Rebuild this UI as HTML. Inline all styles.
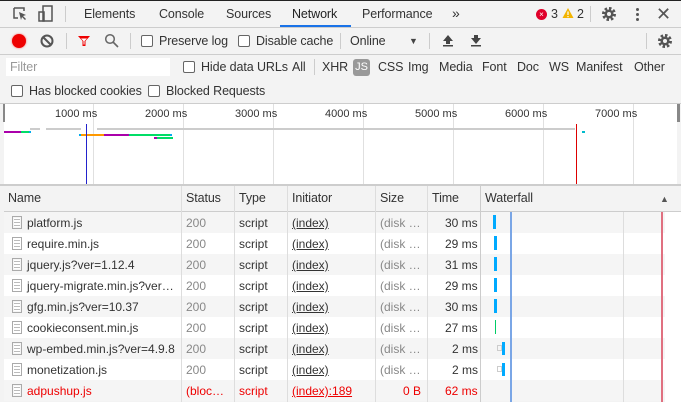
<!DOCTYPE html><html><head><meta charset="utf-8"><style>
*{margin:0;padding:0;box-sizing:border-box}
body{width:681px;height:402px;overflow:hidden;background:#f3f3f3;font-family:"Liberation Sans",sans-serif;font-size:12px;color:#333;position:relative}
.a{position:absolute;white-space:nowrap}
.t{font-size:12.5px;letter-spacing:-0.1px}
.cb{position:absolute;width:12px;height:12px;border:1px solid #666;border-radius:2px;background:#fff}
.hl{position:absolute;height:1px;background:#cdcdcd}
.vl{position:absolute;width:1px;background:#ccc}
.row{position:absolute;left:4px;width:677px;height:21px}
.c{position:absolute;top:4px;white-space:nowrap}
.g{color:#888}
.u{text-decoration:underline}
.doc{position:absolute;left:8px;top:4px;width:10px;height:13px;border:1px solid #aaa;background:repeating-linear-gradient(#fff 0 2px,#bbb 2px 3px);background-clip:content-box;padding:1px}
</style></head><body>
<div class="a" style="left:0;top:0;width:681px;height:1px;background:#222"></div>
<svg class="a" style="left:12px;top:6px" width="16" height="16" viewBox="0 0 16 16"><path d="M2 2h10v3M2 2v10h4" fill="none" stroke="#555" stroke-width="1.5"/><path d="M7 6l7 3-3 1 3 3-1 1-3-3-1 3z" fill="#555"/></svg>
<svg class="a" style="left:38px;top:5px" width="16" height="18" viewBox="0 0 16 18"><rect x="5" y="1" width="9" height="15" fill="none" stroke="#555" stroke-width="1.5"/><rect x="1" y="7" width="5" height="9" fill="none" stroke="#555" stroke-width="1.5"/></svg>
<div class="vl" style="left:65px;top:6px;height:16px"></div>
<div class="a t" style="left:84px;top:7px">Elements</div>
<div class="a t" style="left:159px;top:7px">Console</div>
<div class="a t" style="left:226px;top:7px">Sources</div>
<div class="a t" style="left:292px;top:7px;color:#222">Network</div>
<div class="a" style="left:280px;top:25px;width:71px;height:2px;background:#1a73e8"></div>
<div class="a t" style="left:362px;top:7px">Performance</div>
<div class="a" style="left:452px;top:5px;font-size:14px">»</div>
<div class="a" style="left:536px;top:9px;width:11px;height:11px;border-radius:50%;background:#e0002a;color:#fff;font-size:8px;line-height:11px;text-align:center">×</div>
<div class="a t" style="left:551px;top:7px">3</div>
<svg class="a" style="left:562px;top:7px" width="12" height="12"><path d="M6 1L11.5 11H.5z" fill="#f2b400"/><rect x="5.4" y="4.5" width="1.2" height="3.5" fill="#fff"/><rect x="5.4" y="9" width="1.2" height="1.2" fill="#fff"/></svg>
<div class="a t" style="left:577px;top:7px">2</div>
<div class="vl" style="left:590px;top:6px;height:16px"></div>
<svg class="a" style="left:601px;top:6px" width="16" height="16" viewBox="0 0 16 16"><circle cx="8" cy="8" r="5" fill="none" stroke="#555" stroke-width="4" stroke-dasharray="2.2 1.7"/><circle cx="8" cy="8" r="4.5" fill="#555"/><circle cx="8" cy="8" r="2" fill="#f3f3f3"/></svg>
<div class="a" style="left:636px;top:8px;width:3px;height:3px;background:#555;border-radius:50%;box-shadow:0 5px #555,0 10px #555"></div>
<div class="a" style="left:656px;top:4px;font-size:18px;color:#555">✕</div>
<div class="hl" style="left:0;top:27px;width:681px"></div>
<div class="a" style="left:12px;top:34px;width:14px;height:14px;border-radius:50%;background:#e00;box-shadow:0 0 2px #f66"></div>
<svg class="a" style="left:40px;top:34px" width="14" height="14"><circle cx="7" cy="7" r="5.5" fill="none" stroke="#555" stroke-width="2"/><path d="M3 3l8 8" stroke="#555" stroke-width="2"/></svg>
<div class="vl" style="left:66px;top:33px;height:16px"></div>
<svg class="a" style="left:77px;top:34px" width="14" height="14"><path d="M1 2h12L8.5 7v5h-3V7z" fill="#e00"/><path d="M4 4.5h6L7.5 7v3.5h-1V7z" fill="#fff"/></svg>
<svg class="a" style="left:104px;top:33px" width="15" height="15"><circle cx="6" cy="6" r="4.3" fill="none" stroke="#666" stroke-width="1.5"/><path d="M9 9l5 5" stroke="#666" stroke-width="1.6"/></svg>
<div class="vl" style="left:130px;top:33px;height:16px"></div>
<div class="cb" style="left:141px;top:35px"></div><div class="a t" style="left:159px;top:34px">Preserve log</div>
<div class="cb" style="left:238px;top:35px"></div><div class="a t" style="left:256px;top:34px">Disable cache</div>
<div class="vl" style="left:340px;top:33px;height:16px"></div>
<div class="a t" style="left:350px;top:34px">Online</div>
<div class="a" style="left:409px;top:36px;font-size:9px;color:#444">▼</div>
<div class="vl" style="left:429px;top:33px;height:16px"></div>
<svg class="a" style="left:442px;top:34px" width="12" height="13"><path d="M6 1L1 7h3v3h4V7h3z" fill="#444"/><rect x="1" y="11" width="10" height="1.5" fill="#444"/></svg>
<svg class="a" style="left:470px;top:34px" width="12" height="13"><path d="M6 10L1 4h3V1h4v3h3z" fill="#444"/><rect x="1" y="11" width="10" height="1.5" fill="#444"/></svg>
<div class="vl" style="left:646px;top:33px;height:16px"></div>
<svg class="a" style="left:657px;top:33px" width="16" height="16" viewBox="0 0 16 16"><circle cx="8" cy="8" r="5" fill="none" stroke="#555" stroke-width="4" stroke-dasharray="2.2 1.7"/><circle cx="8" cy="8" r="4.5" fill="#555"/><circle cx="8" cy="8" r="2" fill="#f3f3f3"/></svg>
<div class="hl" style="left:0;top:54px;width:681px"></div>
<div class="a" style="left:6px;top:58px;width:164px;height:18px;background:#fff"></div>
<div class="a t" style="left:10px;top:60px;color:#999">Filter</div>
<div class="cb" style="left:183px;top:61px"></div><div class="a t" style="left:201px;top:60px">Hide data URLs</div>
<div class="a t" style="left:292px;top:60px">All</div>
<div class="vl" style="left:314px;top:59px;height:16px"></div>
<div class="a t" style="left:322px;top:60px">XHR</div>
<div class="a" style="left:353px;top:59px;width:17px;height:17px;background:#999;border-radius:3px;color:#fff;font-size:11px;text-align:center;line-height:17px">JS</div>
<div class="a t" style="left:378px;top:60px">CSS</div>
<div class="a t" style="left:408px;top:60px">Img</div>
<div class="a t" style="left:439px;top:60px">Media</div>
<div class="a t" style="left:482px;top:60px">Font</div>
<div class="a t" style="left:517px;top:60px">Doc</div>
<div class="a t" style="left:549px;top:60px">WS</div>
<div class="a t" style="left:576px;top:60px">Manifest</div>
<div class="a t" style="left:634px;top:60px">Other</div>
<div class="cb" style="left:11px;top:85px"></div><div class="a t" style="left:29px;top:84px">Has blocked cookies</div>
<div class="cb" style="left:148px;top:85px"></div><div class="a t" style="left:166px;top:84px">Blocked Requests</div>
<div class="hl" style="left:0;top:103px;width:681px"></div>
<div class="a" style="left:4px;top:104px;width:673px;height:80px;background:#fff"></div>
<div class="a" style="left:3px;top:104px;width:2px;height:18px;background:#888"></div>
<div class="a" style="left:677px;top:104px;width:3px;height:18px;background:#888"></div>
<div class="vl" style="left:93px;top:104px;height:80px;background:#e0e0e0"></div>
<div class="vl" style="left:183px;top:104px;height:80px;background:#e0e0e0"></div>
<div class="vl" style="left:273px;top:104px;height:80px;background:#e0e0e0"></div>
<div class="vl" style="left:363px;top:104px;height:80px;background:#e0e0e0"></div>
<div class="vl" style="left:453px;top:104px;height:80px;background:#e0e0e0"></div>
<div class="vl" style="left:543px;top:104px;height:80px;background:#e0e0e0"></div>
<div class="vl" style="left:633px;top:104px;height:80px;background:#e0e0e0"></div>
<div class="a" style="left:55px;top:108px;font-size:11px">1000 ms</div>
<div class="a" style="left:145px;top:108px;font-size:11px">2000 ms</div>
<div class="a" style="left:235px;top:108px;font-size:11px">3000 ms</div>
<div class="a" style="left:325px;top:108px;font-size:11px">4000 ms</div>
<div class="a" style="left:415px;top:108px;font-size:11px">5000 ms</div>
<div class="a" style="left:505px;top:108px;font-size:11px">6000 ms</div>
<div class="a" style="left:595px;top:108px;font-size:11px">7000 ms</div>
<div class="a" style="left:30px;top:128px;width:10px;height:2px;background:#ccc"></div>
<div class="a" style="left:46px;top:128px;width:35px;height:2px;background:#ccc"></div>
<div class="a" style="left:97px;top:128px;width:478px;height:2px;background:#ccc"></div>
<div class="a" style="left:4px;top:131px;width:17px;height:2px;background:#a0a"></div>
<div class="a" style="left:21px;top:131px;width:8px;height:2px;background:#0d6"></div>
<div class="a" style="left:29px;top:131px;width:2px;height:2px;background:#0ae"></div>
<div class="a" style="left:79px;top:134px;width:2px;height:2px;background:#0ae"></div>
<div class="a" style="left:81px;top:134px;width:23px;height:2px;background:#f90"></div>
<div class="a" style="left:104px;top:134px;width:25px;height:2px;background:#a0a"></div>
<div class="a" style="left:129px;top:134px;width:41px;height:2px;background:#0d6"></div>
<div class="a" style="left:170px;top:134px;width:2px;height:2px;background:#0ae"></div>
<div class="a" style="left:154px;top:137px;width:3px;height:2px;background:#a0a"></div>
<div class="a" style="left:157px;top:137px;width:16px;height:2px;background:#0d6"></div>
<div class="a" style="left:582px;top:131px;width:3px;height:2px;background:#0bc"></div>
<div class="a" style="left:86px;top:124px;width:1px;height:60px;background:#22c"></div>
<div class="a" style="left:576px;top:124px;width:1px;height:60px;background:#d00"></div>
<div class="hl" style="left:0;top:184px;width:681px;height:2px"></div>
<div class="a" style="left:4px;top:186px;width:677px;height:26px;background:#f3f3f3;border-bottom:1px solid #cdcdcd"></div>
<div class="a t" style="left:8px;top:191px">Name</div>
<div class="a t" style="left:186px;top:191px">Status</div>
<div class="a t" style="left:239px;top:191px">Type</div>
<div class="a t" style="left:292px;top:191px">Initiator</div>
<div class="a t" style="left:380px;top:191px">Size</div>
<div class="a t" style="left:432px;top:191px">Time</div>
<div class="a t" style="left:485px;top:191px">Waterfall</div>
<div class="a" style="left:660px;top:194px;font-size:9px;color:#555">▲</div>
<div class="row" style="top:212px;background:#f5f5f5"></div>
<div class="row" style="top:233px;background:#fff"></div>
<div class="row" style="top:254px;background:#f5f5f5"></div>
<div class="row" style="top:275px;background:#fff"></div>
<div class="row" style="top:296px;background:#f5f5f5"></div>
<div class="row" style="top:317px;background:#fff"></div>
<div class="row" style="top:338px;background:#f5f5f5"></div>
<div class="row" style="top:359px;background:#fff"></div>
<div class="row" style="top:380px;background:#f5f5f5"></div>
<div class="a" style="left:665px;top:212px;width:16px;height:190px;background:#fff"></div>
<div class="vl" style="left:181px;top:186px;height:216px;background:#ddd"></div>
<div class="vl" style="left:234px;top:186px;height:216px;background:#ddd"></div>
<div class="vl" style="left:287px;top:186px;height:216px;background:#ddd"></div>
<div class="vl" style="left:375px;top:186px;height:216px;background:#ddd"></div>
<div class="vl" style="left:427px;top:186px;height:216px;background:#ddd"></div>
<div class="vl" style="left:480px;top:186px;height:216px;background:#ccc"></div>
<div class="vl" style="left:623px;top:212px;height:190px;background:#ddd"></div>
<div class="a" style="left:510px;top:212px;width:2px;height:190px;background:#7aa6e6"></div>
<div class="a" style="left:661px;top:212px;width:2px;height:190px;background:#e07080"></div>
<div class="a" style="left:4px;top:212px;width:480px;height:190px">
<div style="position:absolute;top:0;left:0;width:480px;height:21px"><div class="doc"></div><span class="c" style="left:23px">platform.js</span><span class="c g" style="left:182px">200</span><span class="c" style="left:235px">script</span><span class="c u" style="left:288px">(index)</span><span class="c g" style="left:376px">(disk …</span><span class="c" style="left:441px">30 ms</span></div>
<div style="position:absolute;top:21px;left:0;width:480px;height:21px"><div class="doc"></div><span class="c" style="left:23px">require.min.js</span><span class="c g" style="left:182px">200</span><span class="c" style="left:235px">script</span><span class="c u" style="left:288px">(index)</span><span class="c g" style="left:376px">(disk …</span><span class="c" style="left:441px">29 ms</span></div>
<div style="position:absolute;top:42px;left:0;width:480px;height:21px"><div class="doc"></div><span class="c" style="left:23px">jquery.js?ver=1.12.4</span><span class="c g" style="left:182px">200</span><span class="c" style="left:235px">script</span><span class="c u" style="left:288px">(index)</span><span class="c g" style="left:376px">(disk …</span><span class="c" style="left:441px">31 ms</span></div>
<div style="position:absolute;top:63px;left:0;width:480px;height:21px"><div class="doc"></div><span class="c" style="left:23px">jquery-migrate.min.js?ver…</span><span class="c g" style="left:182px">200</span><span class="c" style="left:235px">script</span><span class="c u" style="left:288px">(index)</span><span class="c g" style="left:376px">(disk …</span><span class="c" style="left:441px">29 ms</span></div>
<div style="position:absolute;top:84px;left:0;width:480px;height:21px"><div class="doc"></div><span class="c" style="left:23px">gfg.min.js?ver=10.37</span><span class="c g" style="left:182px">200</span><span class="c" style="left:235px">script</span><span class="c u" style="left:288px">(index)</span><span class="c g" style="left:376px">(disk …</span><span class="c" style="left:441px">30 ms</span></div>
<div style="position:absolute;top:105px;left:0;width:480px;height:21px"><div class="doc"></div><span class="c" style="left:23px">cookieconsent.min.js</span><span class="c g" style="left:182px">200</span><span class="c" style="left:235px">script</span><span class="c u" style="left:288px">(index)</span><span class="c g" style="left:376px">(disk …</span><span class="c" style="left:441px">27 ms</span></div>
<div style="position:absolute;top:126px;left:0;width:480px;height:21px"><div class="doc"></div><span class="c" style="left:23px">wp-embed.min.js?ver=4.9.8</span><span class="c g" style="left:182px">200</span><span class="c" style="left:235px">script</span><span class="c u" style="left:288px">(index)</span><span class="c g" style="left:376px">(disk …</span><span class="c" style="left:448px">2 ms</span></div>
<div style="position:absolute;top:147px;left:0;width:480px;height:21px"><div class="doc"></div><span class="c" style="left:23px">monetization.js</span><span class="c g" style="left:182px">200</span><span class="c" style="left:235px">script</span><span class="c u" style="left:288px">(index)</span><span class="c g" style="left:376px">(disk …</span><span class="c" style="left:448px">2 ms</span></div>
<div style="position:absolute;top:168px;left:0;width:480px;height:21px;color:#e00"><div class="doc"></div><span class="c" style="left:23px">adpushup.js</span><span class="c" style="left:182px">(bloc…</span><span class="c" style="left:235px">script</span><span class="c u" style="left:288px">(index):189</span><span class="c" style="left:399px">0 B</span><span class="c" style="left:441px">62 ms</span></div>
</div>
<div class="a" style="left:493px;top:215px;width:3px;height:14px;background:#0af"></div>
<div class="a" style="left:494px;top:236px;width:3px;height:14px;background:#0af"></div>
<div class="a" style="left:494px;top:257px;width:3px;height:14px;background:#0af"></div>
<div class="a" style="left:494px;top:278px;width:3px;height:14px;background:#0af"></div>
<div class="a" style="left:494px;top:299px;width:3px;height:14px;background:#0af"></div>
<div class="a" style="left:495px;top:320px;width:1px;height:14px;background:#0c6"></div>
<div class="a" style="left:497px;top:345px;width:5px;height:6px;border:1px solid #ccc"></div>
<div class="a" style="left:502px;top:342px;width:3px;height:13px;background:#0af"></div>
<div class="a" style="left:497px;top:366px;width:5px;height:6px;border:1px solid #ccc"></div>
<div class="a" style="left:502px;top:363px;width:3px;height:13px;background:#0af"></div>
</body></html>
